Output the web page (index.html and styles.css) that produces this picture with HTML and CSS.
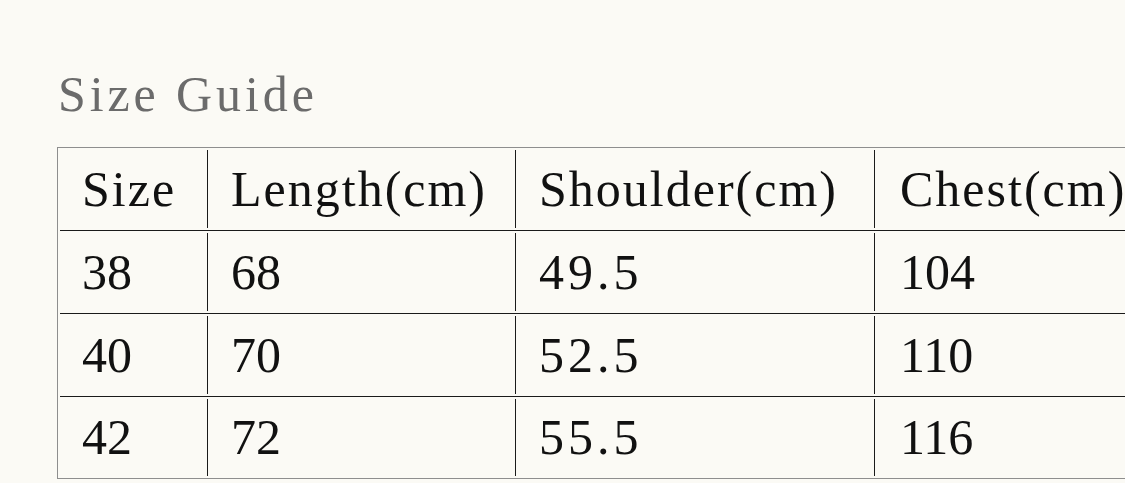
FILE: index.html
```html
<!DOCTYPE html>
<html lang="en">
<head>
    <meta charset="UTF-8">
    <title>Size Guide</title>
    <link rel="stylesheet" href="styles.css">
</head>
<body>

<div class="guide">
    <h1 class="guide-title">Size Guide</h1>

    <table class="size-table">
        <colgroup>
            <col class="col-size">
            <col class="col-length">
            <col class="col-shoulder">
            <col class="col-chest">
        </colgroup>
        <tr class="head-row">
            <td>Size</td>
            <td>Length(cm)</td>
            <td>Shoulder(cm)</td>
            <td>Chest(cm)</td>
        </tr>
        <tr>
            <td>38</td>
            <td>68</td>
            <td class="dec">49.5</td>
            <td>104</td>
        </tr>
        <tr>
            <td>40</td>
            <td>70</td>
            <td class="dec">52.5</td>
            <td>110</td>
        </tr>
        <tr class="last-row">
            <td>42</td>
            <td>72</td>
            <td class="dec">55.5</td>
            <td>116</td>
        </tr>
    </table>
</div>

</body>
</html>
```

FILE: styles.css
```css
body {
    margin: 0;
    padding: 0;
    background-color: #fbfaf5;
    font-family: "Liberation Serif", "Times New Roman", serif;
    color: #111;
    overflow: hidden;
}

.guide {
    padding: 64px 0 0 57px;
}

.guide-title {
    margin: 0 0 23px 1px;
    font-size: 50px;
    font-weight: normal;
    line-height: 60px;
    letter-spacing: 3.9px;
    color: #6b6b6b;
}

.size-table {
    width: 1068px;
    table-layout: fixed;
    border-collapse: separate;
    border-spacing: 0;
    border: 1px solid #8e8e8e;
    border-right: none;
    padding: 0 0 0 2px;
}

.col-size { width: 147px; }
.col-length { width: 308px; }
.col-shoulder { width: 359px; }
.col-chest { width: 251px; }

.size-table td {
    padding: 0 0 0 24px;
    font-size: 50px;
    line-height: 82px;
    height: 82px;
    white-space: nowrap;
    overflow: hidden;
    border-bottom: 1px solid #1a1a1a;
    background: linear-gradient(#1a1a1a, #1a1a1a) left 0 top 2px / 1px calc(100% - 4px) no-repeat;
    vertical-align: middle;
}

.size-table td:first-child {
    padding-left: 22px;
    background: none;
}

.size-table td:last-child {
    padding-left: 26px;
}

.head-row td {
    letter-spacing: 2px;
}

.size-table td.dec {
    letter-spacing: 4px;
}

.last-row td {
    border-bottom: none;
    height: 81px;
    line-height: 81px;
}
```
